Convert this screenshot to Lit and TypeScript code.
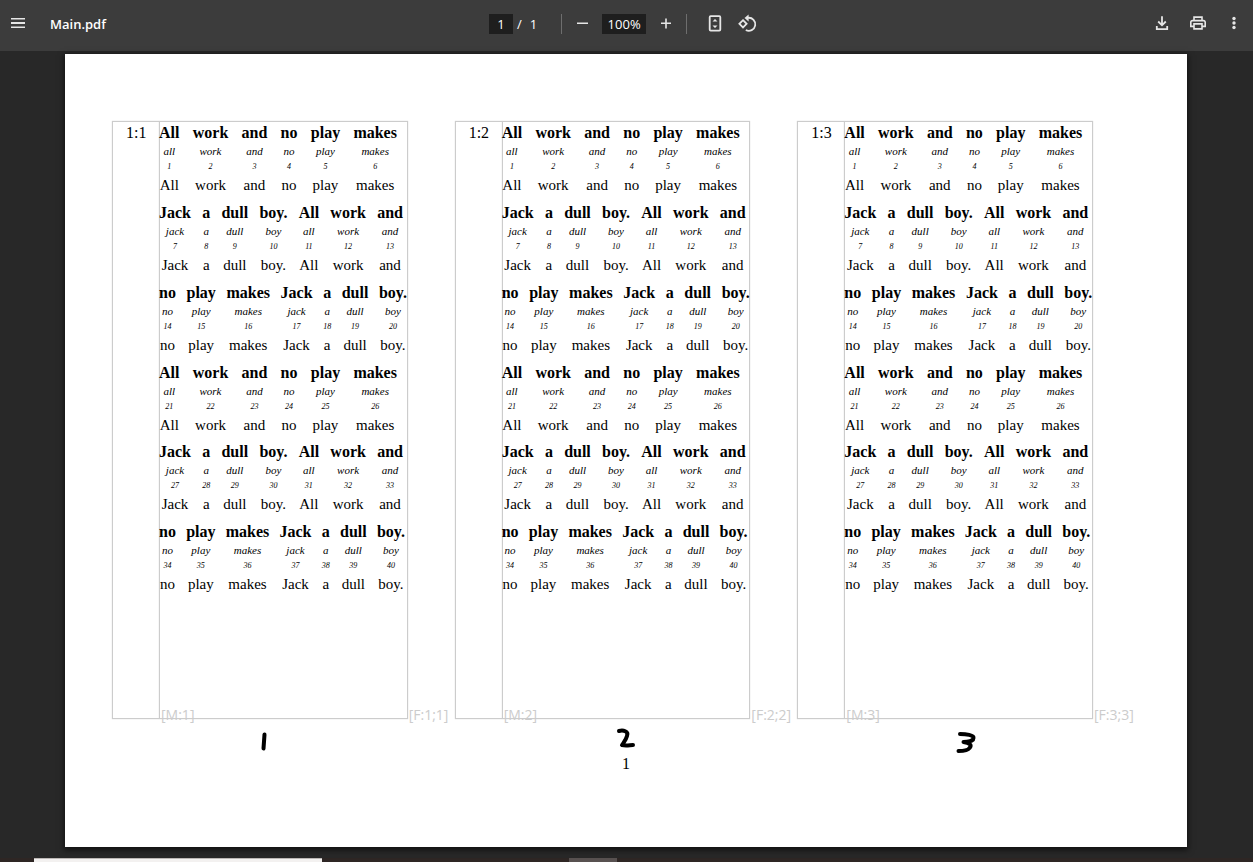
import { LitElement, html, css, svg } from "lit";
import { customElement, property } from "lit/decorators.js";

interface Line {
  width: number;
  words: string[];
}

const SENTENCE: Line[] = [
  { width: 238, words: ["All", "work", "and", "no", "play", "makes"] },
  { width: 244, words: ["Jack", "a", "dull", "boy.", "All", "work", "and"] },
  { width: 248, words: ["no", "play", "makes", "Jack", "a", "dull", "boy."] },
  { width: 238, words: ["All", "work", "and", "no", "play", "makes"] },
  { width: 244, words: ["Jack", "a", "dull", "boy.", "All", "work", "and"] },
  { width: 246, words: ["no", "play", "makes", "Jack", "a", "dull", "boy."] },
];

const gloss = (word: string) => word.toLowerCase().replace(".", "");

@customElement("text-frame")
class TextFrame extends LitElement {
  @property({ type: Number }) number = 1;

  static styles = css`
    :host {
      display: grid;
      grid-template-columns: 47px minmax(0, 1fr) 47px;
      color: #000;
      font-family: "Liberation Serif", "Times New Roman", serif;
    }
    .verse,
    .main {
      box-sizing: border-box;
      border: 1px solid #ccc;
      box-shadow: 0 0 1px #ccc;
    }
    .verse {
      border-right: 0;
      padding: 1px 0 0 13px;
      font-size: 16px;
      line-height: 20px;
    }
    .main {
      display: flex;
      flex-direction: column;
      justify-content: space-between;
    }
    .lines {
      display: grid;
      grid-auto-rows: 1fr;
      height: 479px;
      margin-left: -1px;
    }
    .line {
      display: flex;
      justify-content: space-between;
    }
    .word {
      display: flex;
      flex-direction: column;
      align-items: center;
      white-space: nowrap;
    }
    .head {
      font-size: 16px;
      font-weight: 700;
      line-height: 22px;
    }
    .gloss {
      font-size: 11px;
      font-style: italic;
      line-height: 15px;
    }
    .index {
      font-size: 8px;
      font-style: italic;
      line-height: 16px;
    }
    .plain {
      font-size: 15px;
      line-height: 20px;
    }
    .mark {
      color: #ccc;
      font: 14px/16px "Open Sans", "Noto Sans", sans-serif;
      white-space: nowrap;
      padding-left: 1px;
    }
    .main .mark {
      margin-bottom: -5px;
    }
    .side {
      display: flex;
      align-items: flex-end;
      margin-bottom: -4px;
    }
  `;

  render() {
    let n = 0;
    return html`
      <div class="verse">1:${this.number}</div>
      <div class="main">
        <div class="lines">
          ${SENTENCE.map(
            (line) => html`<div class="line" style="width:${line.width}px">
              ${line.words.map(
                (w) => html`<div class="word">
                  <span class="head">${w}</span>
                  <span class="gloss">${gloss(w)}</span>
                  <span class="index">${++n}</span>
                  <span class="plain">${w}</span>
                </div>`
              )}
            </div>`
          )}
        </div>
        <div class="mark">[M:${this.number}]</div>
      </div>
      <div class="side"><span class="mark">[F:${this.number};${this.number}]</span></div>
    `;
  }
}

@customElement("pdf-toolbar")
class PdfToolbar extends LitElement {
  static styles = css`
    :host {
      display: grid;
      grid-template-columns: 1fr auto 1fr;
      align-items: center;
      box-sizing: border-box;
      height: 51px;
      padding: 0 7px 4px 6px;
      background: #3c3c3c;
      color: #fff;
      font: 13px/20px "Open Sans", "Noto Sans", sans-serif;
    }
    .left,
    .center,
    .right {
      display: flex;
      align-items: center;
    }
    .left {
      gap: 20px;
    }
    .center {
      padding-right: 4px;
    }
    .right {
      justify-content: flex-end;
      gap: 12px;
    }
    .title {
      margin: 0;
      font-size: 13px;
      font-weight: 600;
    }
    button {
      display: block;
      width: 24px;
      height: 24px;
      padding: 0;
      border: 0;
      background: none;
      color: #e6e6e6;
    }
    svg {
      display: block;
      width: 24px;
      height: 24px;
      fill: currentColor;
    }
    .open {
      fill: none;
      stroke: currentColor;
      stroke-width: 1.8;
    }
    input {
      box-sizing: border-box;
      height: 20px;
      padding: 0;
      border: 0;
      background: #1e1e1e;
      color: #fff;
      font: inherit;
      text-align: center;
    }
    .page {
      width: 24px;
    }
    .zoom {
      width: 44px;
    }
    .slash {
      margin: 0 8px 0 4px;
    }
    .rule {
      width: 1px;
      height: 20px;
      background: #6e6e6e;
    }
    .total {
      margin-right: 24px;
    }
    .minus,
    .plus {
      margin: 0 8px;
    }
    .fit {
      margin: 0 8px 0 16px;
    }
  `;

  render() {
    return html`
      <div class="left">
        <button aria-label="Menu">
          <svg viewBox="0 0 24 24"><path d="M5 6h14v1.500H5zM5 10h14v2H5zM5 14.500h14v1.500H5z" /></svg>
        </button>
        <h1 class="title">Main.pdf</h1>
      </div>
      <div class="center">
        <input class="page" aria-label="Page number" value="1" />
        <span class="slash">/</span>
        <span class="total">1</span>
        <span class="rule"></span>
        <button class="minus" aria-label="Zoom out">
          <svg viewBox="0 0 24 24"><path d="M7 10.500h11v1.500H7z" /></svg>
        </button>
        <input class="zoom" aria-label="Zoom level" value="100%" />
        <button class="plus" aria-label="Zoom in">
          <svg viewBox="0 0 24 24"><path d="M7 10.500h4.200V6.500h1.600v4H17v1.600h-4.200v4.400h-1.600v-4.400H7z" /></svg>
        </button>
        <span class="rule"></span>
        <button class="fit" aria-label="Fit to page">
          <svg viewBox="0 0 24 24">
            <rect class="open" x="6.700" y="4.200" width="10.600" height="14.400" rx="1" />
            <path d="M12 7l2.500 2.500h-5zM12 16l-2.500-2.500h5z" />
          </svg>
        </button>
        <button aria-label="Rotate counterclockwise">
          <svg viewBox="0 0 24 24">
            <path class="open" d="M8 8.200l3.600 3.600L8 15.400l-3.600-3.600z" />
            <path class="open" d="M13 5.800a6.500 6.500 0 1 1-2.200 12.200" />
            <path d="M9.500 6L13.600 2.500v7z" />
          </svg>
        </button>
      </div>
      <div class="right">
        <button aria-label="Download">
          <svg viewBox="0 0 24 24">
            <path class="open" d="M12 4.300v9M8.200 9.500l3.800 3.800 3.800-3.800M6.800 14v3.200h10.400V14" />
          </svg>
        </button>
        <button aria-label="Print">
          <svg viewBox="0 0 24 24">
            <path
              d="M19 8h-1V4H6v4H5c-1.660 0-3 1.340-3 3v6h4v3h12v-3h4v-6c0-1.660-1.340-3-3-3zM8 6h8v2H8zm8 12H8v-4h8zm2-3v-3H6v3H4v-4c0-.55.45-1 1-1h14c.55 0 1 .45 1 1v4z"
              transform="translate(2.400 1) scale(.8 .84)"
            />
          </svg>
        </button>
        <button aria-label="More actions">
          <svg viewBox="0 0 24 24">
            <circle cx="12" cy="6.500" r="1.700" /><circle cx="12" cy="11" r="1.700" /><circle cx="12" cy="15.500" r="1.700" />
          </svg>
        </button>
      </div>
    `;
  }
}

const STROKES = [
  { left: 16.6, d: "M13.500 7.500l-1 14" },
  { left: 48.9, d: "M5 4c4-1 10 0 8 5-1 4-3 6-5 9 4 1 8 0 11 0" },
  { left: 79.3, d: "M5 7c6 0 14 1 13.500 4 0 3-6 4-10 4 6 1 9 3 6 6-2 3-7 3-11 3" },
];

@customElement("app-root")
class AppRoot extends LitElement {
  static styles = css`
    :host {
      display: flex;
      flex-direction: column;
      min-height: 100vh;
      background: #282828;
    }
    .viewer {
      flex: 1;
      padding: 3px 66px 11px 65px;
    }
    .sheet {
      position: relative;
      box-sizing: border-box;
      min-height: 793px;
      padding: 67px 47px 0;
      background: #fff;
      box-shadow: 0 2px 6px 1px rgba(0, 0, 0, 0.6);
    }
    .frames {
      display: grid;
      grid-template-columns: repeat(3, minmax(0, 1fr));
      height: 598px;
    }
    .folio {
      margin: 35px 0 0;
      color: #000;
      font: 16px/20px "Liberation Serif", serif;
      text-align: center;
    }
    .ink {
      position: absolute;
      top: 673px;
      width: 28px;
      height: 28px;
      fill: none;
      stroke: #000;
      stroke-width: 4;
      stroke-linecap: round;
      stroke-linejoin: round;
    }
    .taskbar {
      display: grid;
      grid-template-columns: 34px 288px 247px 48px 1fr;
      height: 4px;
      background: #2e2624;
    }
    .window {
      grid-column: 2;
      border-top: 1px solid #bdb8b6;
      background: #f3f1f0;
    }
    .app {
      grid-column: 4;
      background: #585150;
    }
  `;

  render() {
    return html`
      <pdf-toolbar></pdf-toolbar>
      <main class="viewer">
        <article class="sheet">
          <div class="frames">
            ${[1, 2, 3].map((n) => html`<text-frame .number=${n}></text-frame>`)}
          </div>
          <p class="folio">1</p>
          ${STROKES.map(
            (s) => html`<svg class="ink" viewBox="0 0 28 28" style="left:${s.left}%">
              ${svg`<path d=${s.d} />`}
            </svg>`
          )}
        </article>
      </main>
      <div class="taskbar"><span class="window"></span><span class="app"></span></div>
    `;
  }
}
